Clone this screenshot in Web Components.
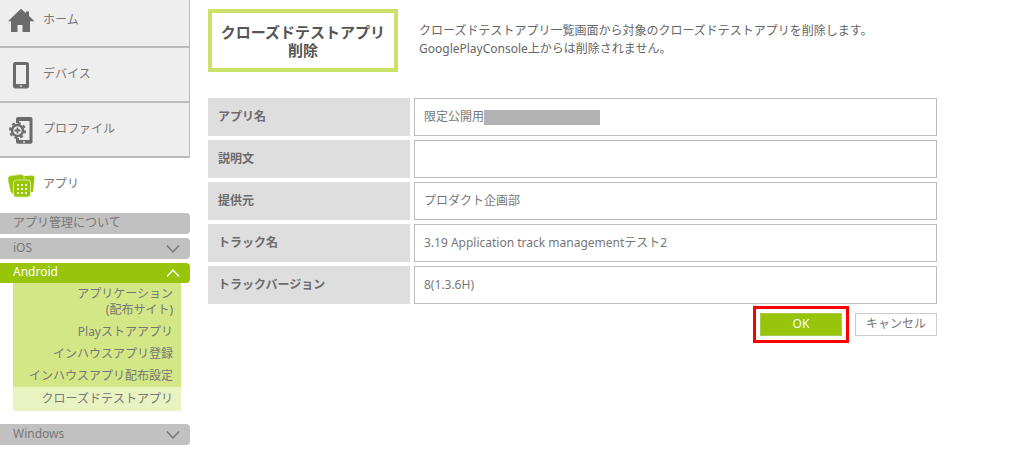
<!DOCTYPE html>
<html lang="ja">
<head>
<meta charset="utf-8">
<title>クローズドテストアプリ削除</title>
<style>
body { margin: 0; background: #fff; color: #777; font: 12px/18px "Noto Sans", "Noto Sans CJK JP", sans-serif; }
</style>
</head>
<body>
<app-shell>
  <side-nav slot="nav">
    <nav-item class="first"><svg slot="icon" width="28" height="28" viewBox="0 0 28 28"><path fill="#6b6b6b" d="M14 .8 1 13.300h3V24h6.500v-7h5v7H23V13.300h4.500L22 8V3.500h-3v1.800z"/></svg>ホーム</nav-item>
    <nav-item><svg slot="icon" width="28" height="28" viewBox="0 0 28 28"><rect x="7.500" y="1.500" width="13" height="23.500" rx="1" fill="none" stroke="#6b6b6b" stroke-width="3"/><path d="M6.500 22h15v3h-15z" fill="#6b6b6b"/><circle cx="14" cy="24" r="1.200" fill="#bbb"/></svg>デバイス</nav-item>
    <nav-item><svg slot="icon" width="28" height="28" viewBox="0 0 28 28"><path fill="#6b6b6b" d="M11 0h13q1.500 0 1.500 2v23q0 1.800-1.500 1.800H11q-2 0-2-1.800v-4h3v2h10.500V4H12v2H9V2q0-2 2-2z"/><circle cx="17" cy="25" r="1.200" fill="#bbb"/><circle cx="10.500" cy="13.500" r="7.500" fill="none" stroke="#6b6b6b" stroke-width="2" stroke-dasharray="3 2.890"/><circle cx="10.500" cy="13.500" r="5.500" fill="#eee" stroke="#6b6b6b" stroke-width="2.500"/><path d="M7.500 13.500h6M10.500 10.500v6" stroke="#6b6b6b" stroke-width="1.800"/></svg>プロファイル</nav-item>
    <nav-item class="current"><svg slot="icon" width="28" height="28" viewBox="0 0 28 28"><path fill="#98c40a" d="m12 4.500 13-1q2.500 0 2.500 2.500L26 20H10z"/><path fill="#98c40a" stroke="#d7eb8c" stroke-width=".7" d="M3 4 14 2.500q2.500 0 3 2l1 17H6Q4 21.500 3.500 19L1 8q-.5-3.500 2-4z"/><rect x="6.500" y="8" width="17" height="17" rx="3" fill="#98c40a" stroke="#d7eb8c"/><path d="M10 13h10M10 17h10M10 21h10" stroke="#f4ffd0" stroke-width="2" stroke-dasharray="2 2"/></svg>アプリ</nav-item>
    <nav-section>アプリ管理について</nav-section>
    <nav-section arrow="down">iOS</nav-section>
    <nav-section arrow="up" class="open">Android
      <sub-link slot="links">アプリケーション<br>(配布サイト)</sub-link>
      <sub-link slot="links">Playストアアプリ</sub-link>
      <sub-link slot="links">インハウスアプリ登録</sub-link>
      <sub-link slot="links">インハウスアプリ配布設定</sub-link>
      <sub-link slot="links" class="current">クローズドテストアプリ</sub-link>
    </nav-section>
    <nav-section arrow="down">Windows</nav-section>
  </side-nav>
  <page-heading>クローズドテストアプリ<br>削除
    <span slot="description">クローズドテストアプリ一覧画面から対象のクローズドテストアプリを削除します。<br>GooglePlayConsole上からは削除されません。</span>
  </page-heading>
  <app-details></app-details>
  <action-bar>
    <action-button class="primary">OK</action-button>
    <action-button>キャンセル</action-button>
  </action-bar>
</app-shell>

<script>
const define = (name, markup) => {
  const template = document.createElement('template');
  template.innerHTML = markup;
  customElements.define(name, class extends HTMLElement {
    constructor() {
      super();
      this.attachShadow({ mode: 'open' }).append(template.content.cloneNode(true));
    }
  });
};

define('app-shell', `
<style>
:host { display: flex; align-items: flex-start; gap: 18px; }
aside { flex: 0 0 190px; }
main { flex: 1; min-width: 0; max-width: 729px; padding-top: 9px; }
</style>
<aside><slot name="nav"></slot></aside>
<main><slot></slot></main>`);

define('side-nav', `
<style>:host, nav { display: block; }</style>
<nav><slot></slot></nav>`);

define('nav-item', `
<style>
:host { display: block; }
a { display: flex; align-items: flex-start; gap: 8px; box-sizing: border-box; height: 55px; padding: 14px 0 0 7px;
    background: #eee; border: solid #bbb; border-width: 0 1px 2px 0; color: #777; text-decoration: none; }
.label { padding-top: 3px; }
:host(.first) a { height: 48px; padding-top: 8px; }
:host(.current) a { background: none; border-color: transparent; }
</style>
<a href="#"><slot name="icon"></slot><span class="label"><slot></slot></span></a>`);

define('nav-section', `
<style>
:host { display: block; margin-bottom: 4px; }
:host(.open) { margin-bottom: 13px; }
a { display: flex; justify-content: space-between; align-items: center; height: 21px; padding: 0 9px 0 13px;
    box-sizing: border-box; border-radius: 0 4px 4px 0; background: #c1c1c1; color: #777; text-decoration: none; }
a span { padding-bottom: 2px; }
svg { display: none; fill: none; stroke: currentColor; stroke-width: 1.5; }
:host([arrow]) svg { display: block; }
:host([arrow=up]) path { transform: rotate(180deg); transform-origin: center; }
:host(.open) a { height: 20px; background: #98c40a; color: #fff; }
.links { margin: 0 9px 0 13px; background: #d3e786; }
</style>
<a href="#"><span><slot></slot></span><svg width="16" height="10" viewBox="0 0 16 10"><path d="M2 1.500 8 8l6-6.500"/></svg></a>
<div class="links"><slot name="links"></slot></div>`);

define('sub-link', `
<style>
:host { display: block; }
a { display: block; padding: 3px 8px; line-height: 16px; text-align: right; color: #777; text-decoration: none; }
:host(.current) a { padding: 4px 8px; background: #e9f3c1; }
</style>
<a href="#"><slot></slot></a>`);

define('page-heading', `
<style>
:host { display: flex; gap: 21px; margin-bottom: 26px; }
h1 { flex: 0 0 190px; box-sizing: border-box; height: 63px; margin: 0; padding-top: 10px; border: 4px solid #cbe26a;
     font-size: 15px; line-height: 18px; text-align: center; color: #555; }
p { margin: 0; padding-top: 13px; color: #666; }
</style>
<h1><slot></slot></h1>
<p><slot name="description"></slot></p>`);

define('app-details', `
<style>
:host { display: block; }
table { width: 100%; border-collapse: separate; border-spacing: 0; table-layout: fixed; }
col:first-child { width: 206px; }
th, td { padding: 0 0 4px; text-align: left; }
th { padding-right: 4px; color: #6b6b6b; }
div { box-sizing: border-box; height: 38px; line-height: 36px; padding: 0 10px; }
th div { background: #dedede; border: solid #dedede; border-width: 1px 0; }
td div { display: flex; align-items: center; border: 1px solid #bbb; padding: 0 9px; }
.mask { width: 116px; height: 15px; background: #b2b2b2; }
</style>
<table>
<colgroup><col><col></colgroup>
<tbody>
<tr><th scope="row"><div>アプリ名</div></th><td><div>限定公開用<span class="mask"></span></div></td></tr>
<tr><th scope="row"><div>説明文</div></th><td><div></div></td></tr>
<tr><th scope="row"><div>提供元</div></th><td><div>プロダクト企画部</div></td></tr>
<tr><th scope="row"><div>トラック名</div></th><td><div>3.19 Application track managementテスト2</div></td></tr>
<tr><th scope="row"><div>トラックバージョン</div></th><td><div>8(1.3.6H)</div></td></tr>
</tbody>
</table>`);

define('action-bar', `
<style>:host { display: flex; justify-content: flex-end; gap: 13px; padding: 5px 0 12px; }</style>
<slot></slot>`);

define('action-button', `
<style>
:host { display: block; }
button { display: block; width: 82px; height: 23px; padding: 0 0 1px; border: 1px solid #ccc; border-radius: 0;
         background: #fff; color: #777; font: inherit; }
:host(.primary) button { background: #98c40a; border-color: #a9c84a; color: #fff; outline: 3px solid #f00; outline-offset: 4px; }
</style>
<button type="button"><slot></slot></button>`);
</script>
</body>
</html>
